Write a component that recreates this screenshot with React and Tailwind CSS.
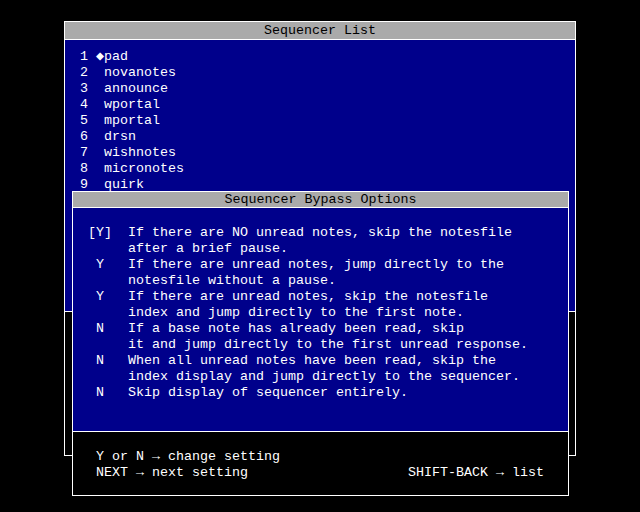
import React from 'react';

const sequencers = ['pad', 'novanotes', 'announce', 'wportal', 'mportal', 'drsn', 'wishnotes', 'micronotes', 'quirk'];

const options = [
    { flag: '[Y]', lines: ['If there are NO unread notes, skip the notesfile', 'after a brief pause.'] },
    { flag: ' Y', lines: ['If there are unread notes, jump directly to the', 'notesfile without a pause.'] },
    { flag: ' Y', lines: ['If there are unread notes, skip the notesfile', 'index and jump directly to the first note.'] },
    { flag: ' N', lines: ['If a base note has already been read, skip', 'it and jump directly to the first unread response.'] },
    { flag: ' N', lines: ['When all unread notes have been read, skip the', 'index display and jump directly to the sequencer.'] },
    { flag: ' N', lines: ['Skip display of sequencer entirely.'] },
];

const row = 'h-[16px] leading-[16px] whitespace-pre';

function Glyph({ children }) {
    return <span className="inline-block w-[8px] text-center">{children}</span>;
}

export default function App() {
    return (
        <div className="relative w-[640px] h-[512px] overflow-hidden bg-black pt-[21px] pl-[64px] text-white text-[13.33px] font-['Liberation_Mono','DejaVu_Sans_Mono',monospace]">
            {/* Sequencer List */}
            <div className="w-[512px] h-[435px] border border-white flex flex-col">
                <div className="h-[18px] shrink-0 bg-[#aaaaaa] border-b border-white flex items-center justify-center text-black">
                    Sequencer List
                </div>
                <div className="h-[272px] shrink-0 bg-[#00008b] border-b border-white pt-[9px] pl-[15px]">
                    {sequencers.map((name, i) => (
                        <div key={name} className={row}>
                            {`${i + 1} `}
                            {i === 0 ? <Glyph>◆</Glyph> : ' '}
                            {name}
                        </div>
                    ))}
                </div>
                <div className="flex-1" />
            </div>

            {/* Bypass options dialog */}
            <div className="absolute left-[72px] top-[191px] w-[497px] h-[305px] border border-white flex flex-col bg-black">
                <div className="h-[16px] shrink-0 bg-[#aaaaaa] border-b border-white flex items-center justify-center text-black">
                    Sequencer Bypass Options
                </div>
                <div className="h-[224px] shrink-0 bg-[#00008b] border-b border-white pt-[17px] pl-[15px]">
                    {options.map((opt) =>
                        opt.lines.map((line, j) => (
                            <div key={line} className={row}>
                                {j === 0 ? opt.flag.padEnd(5, ' ') : '     '}
                                {line}
                            </div>
                        ))
                    )}
                </div>
                <div className="flex-1 pt-[17px] pl-[23px] pr-[24px]">
                    <div className={row}>
                        Y or N <Glyph>→</Glyph> change setting
                    </div>
                    <div className={`${row} flex justify-between`}>
                        <span>NEXT <Glyph>→</Glyph> next setting</span>
                        <span>SHIFT-BACK <Glyph>→</Glyph> list</span>
                    </div>
                </div>
            </div>
        </div>
    );
}
